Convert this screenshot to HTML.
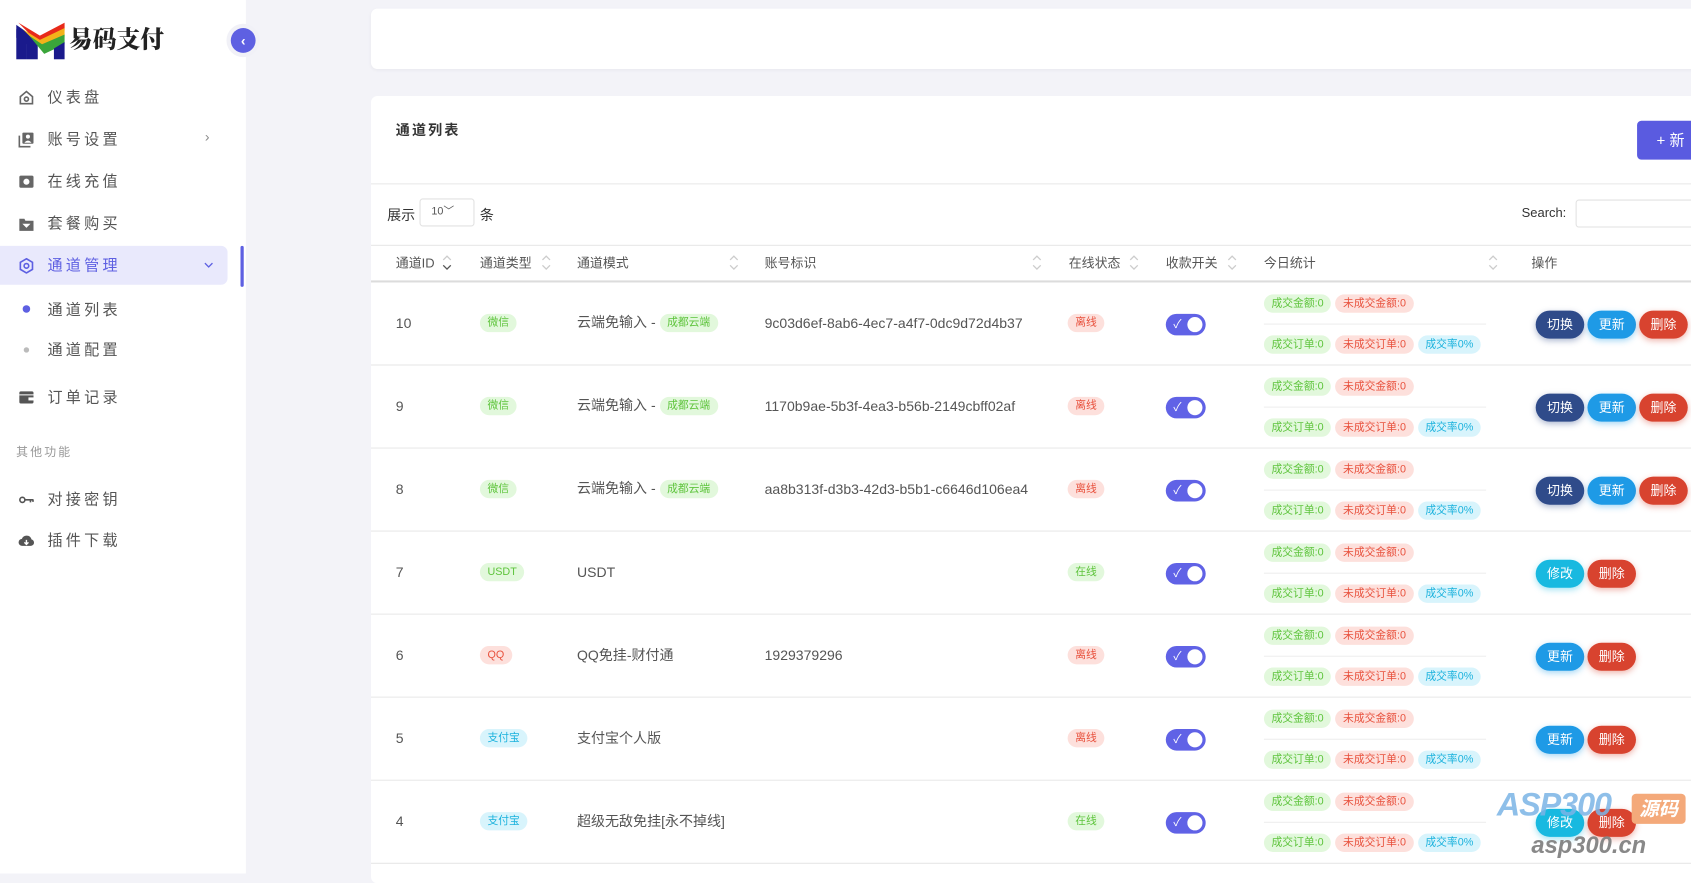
<!DOCTYPE html>
<html><head><meta charset="utf-8">
<style>
*{box-sizing:border-box;margin:0;padding:0}
html,body{width:1691px;height:865px;overflow:hidden;background:#f3f3f8}
body{font-family:"Liberation Sans","Noto Sans CJK SC",sans-serif;color:#555}
#w{position:absolute;left:0;top:0;width:1568px;height:810px;transform:scale(1.07844);transform-origin:0 0}
.a{position:absolute}
#side{left:0;top:0;width:228px;height:810px;background:#fff}
.mi{position:absolute;left:44px;font-size:14px;letter-spacing:3px;color:#555;line-height:20px}
.ic{position:absolute;left:17px;width:15px;height:15px}
.card{background:#fff;border-radius:6px}
.th{position:absolute;top:236px;font-size:12px;color:#555;line-height:16px}
.so{position:absolute;top:235px;width:9px;height:18px}
.row{position:absolute;left:344px;width:1224px;height:77px;border-bottom:1px solid #e6e6e6;background:#fff}
.c{position:absolute;top:30px;font-size:13px;line-height:16px;color:#555}
.tg{display:inline-block;font-size:10px;line-height:17px;height:17px;padding:0 7px;border-radius:9px;vertical-align:middle}
.g{background:#e2f8dc;color:#5ec43c}
.r{background:#fde0dc;color:#e8513d}
.b{background:#d8f4fc;color:#1bb2dd}
.tog{position:absolute;left:737px;top:29px;width:37px;height:20px;border-radius:10px;background:#6062e6}
.tog:after{content:"";position:absolute;right:3px;top:3px;width:14px;height:14px;border-radius:50%;background:#fff}
.tog span{position:absolute;left:7px;top:1px;color:#fff;font-size:11px}
.st1{position:absolute;left:828px;top:11px}
.st2{position:absolute;left:828px;top:49px}
.st1 .tg,.st2 .tg{margin-right:4px}
.ln{position:absolute;left:828px;top:38px;width:206px;border-top:1px solid #eee}
.bt{position:absolute;top:26px;height:26px;width:45px;border-radius:13px;color:#fff;font-size:12px;line-height:26px;text-align:center}
.nv{background:#2f4b8a;box-shadow:0 2px 6px rgba(47,75,138,.4)}
.bl{background:#1e9ae6;box-shadow:0 2px 6px rgba(30,154,230,.4)}
.rd{background:#d8432f;box-shadow:0 2px 6px rgba(216,67,47,.4)}
.cy{background:#18b9e0;box-shadow:0 2px 6px rgba(24,185,224,.4)}
</style></head><body><div id="w">
<div id="side" class="a">
 <svg class="a" style="left:15px;top:19px" width="45" height="36" viewBox="0 0 45 36">
  <path d="M0 4 L20 18 L20 36 L10 36 L10 22 L0 16Z" fill="#1a1a8c"/>
  <path d="M0 36 L0 8 L10 16 L10 36Z" fill="#1a1a8c"/>
  <path d="M2 2 L22 14 L45 2 L45 9 L22 22 Z" fill="#e82a1a"/>
  <path d="M6 8 L22 18 L45 7 L45 15 L24 26 Z" fill="#f3b21a"/>
  <path d="M12 14 L24 22 L45 13 L45 22 L26 31 Z" fill="#3aa53a"/>
  <path d="M35 26 L45 20 L45 36 L35 36Z" fill="#1a1a8c"/>
 </svg>
 <div class="a" style="left:64px;top:22px;font-family:'Noto Serif CJK SC','Liberation Serif',serif;font-weight:900;font-size:22px;color:#222;line-height:28px">易码支付</div>
 <div class="a" style="left:214px;top:26px;width:23px;height:23px;border-radius:50%;background:#5e60e2;box-shadow:0 0 0 4px #f1f1f7;color:#fff;font-size:13px;line-height:23px;text-align:center;font-weight:bold">‹</div>

 <svg class="ic" style="top:83px" viewBox="0 0 16 16" fill="none" stroke="#666" stroke-width="1.6"><path d="M2 7 L8 2 L14 7 V14 H2Z"/><circle cx="8" cy="9.5" r="2"/></svg>
 <div class="mi" style="top:80px">仪表盘</div>
 <svg class="ic" style="top:122px" viewBox="0 0 16 16"><rect x="4" y="1" width="11" height="11" rx="1" fill="#666"/><circle cx="9.5" cy="5" r="2" fill="#fff"/><path d="M6 11 Q9.5 7 13 11Z" fill="#fff"/><path d="M1 4 V15 H12" stroke="#666" stroke-width="1.6" fill="none"/></svg>
 <div class="mi" style="top:119px">账号设置</div>
 <div class="a" style="left:190px;top:119px;color:#888;font-size:13px">›</div>
 <svg class="ic" style="top:161px" viewBox="0 0 16 16"><rect x="1" y="2" width="14" height="12" rx="1.5" fill="#666"/><circle cx="8" cy="8" r="3" fill="#fff"/></svg>
 <div class="mi" style="top:158px">在线充值</div>
 <svg class="ic" style="top:200px" viewBox="0 0 16 16"><path d="M1 3 H6 L7 5 H15 V15 H1Z" fill="#666"/><path d="M4 8 H12 L8 12Z" fill="#fff"/></svg>
 <div class="mi" style="top:197px">套餐购买</div>
 <div class="a" style="left:0;top:228px;width:211px;height:36px;background:#e9e9fc;border-radius:0 6px 6px 0"></div>
 <div class="a" style="left:223px;top:228px;width:3px;height:38px;background:#5e60e2;border-radius:2px"></div>
 <svg class="ic" style="top:239px" viewBox="0 0 16 16" fill="none" stroke="#5e60e2" stroke-width="1.6"><path d="M8 1 L14 4.5 V11.5 L8 15 L2 11.5 V4.5Z"/><circle cx="8" cy="8" r="2.3"/></svg>
 <div class="mi" style="top:236px;color:#5e60e2">通道管理</div>
 <svg class="a" style="left:189px;top:243px" width="9" height="6" viewBox="0 0 9 6" fill="none" stroke="#5e60e2" stroke-width="1.2"><path d="M1 1 L4.5 4.5 L8 1"/></svg>
 <div class="a" style="left:21px;top:283px;width:7px;height:7px;border-radius:50%;background:#5e60e2"></div>
 <div class="mi" style="top:277px">通道列表</div>
 <div class="a" style="left:22px;top:322px;width:5px;height:5px;border-radius:50%;background:#bbb"></div>
 <div class="mi" style="top:314px">通道配置</div>
 <svg class="ic" style="top:361px" viewBox="0 0 16 16"><rect x="1" y="2" width="14" height="12" rx="1.5" fill="#555"/><rect x="1" y="5" width="14" height="1" fill="#fff"/><rect x="10" y="8" width="5" height="3" fill="#fff"/></svg>
 <div class="mi" style="top:358px">订单记录</div>
 <div class="a" style="left:15px;top:411px;font-size:11px;color:#999;letter-spacing:2px">其他功能</div>
 <svg class="ic" style="top:456px" viewBox="0 0 16 16" fill="none" stroke="#555" stroke-width="1.6"><circle cx="4" cy="8" r="2.5"/><path d="M6.5 8 H15 M12 8 V10.5 M14.5 8 V10"/></svg>
 <div class="mi" style="top:453px">对接密钥</div>
 <svg class="ic" style="top:494px" viewBox="0 0 16 16"><path d="M4 13 A3.5 3.5 0 0 1 3.5 6 A5 5 0 0 1 13 6.5 A3.3 3.3 0 0 1 12.5 13Z" fill="#555"/><path d="M8 7 V11 M6 9.5 L8 11.5 L10 9.5" stroke="#fff" stroke-width="1.4" fill="none"/></svg>
 <div class="mi" style="top:491px">插件下载</div>
</div>

<div class="a card" style="left:344px;top:8px;width:1240px;height:56px;box-shadow:0 1px 3px rgba(0,0,0,.04)"></div>
<div class="a card" style="left:344px;top:89px;width:1240px;height:730px"></div>
<div class="a" style="left:367px;top:110px;font-size:13px;font-weight:bold;color:#333;letter-spacing:2px">通道列表</div>
<div class="a" style="left:1518px;top:112px;width:60px;height:36px;background:#5a5be0;border-radius:4px;color:#fff;font-size:14px;line-height:36px;padding-left:18px">+ 新</div>
<div class="a" style="left:344px;top:170px;width:1224px;border-top:1px solid #e8e8e8"></div>
<div class="a" style="left:359px;top:189px;font-size:13px;color:#333">展示</div>
<div class="a" style="left:389px;top:184px;width:51px;height:26px;border:1px solid #e2e2e2;border-radius:3px;font-size:10px;line-height:24px;padding-left:10px;color:#555">10﹀</div>
<div class="a" style="left:445px;top:189px;font-size:13px;color:#333">条</div>
<div class="a" style="left:1411px;top:190px;font-size:12px;color:#333">Search:</div>
<div class="a" style="left:1461px;top:185px;width:120px;height:26px;border:1px solid #e2e2e2;border-radius:3px"></div>
<div class="a" style="left:344px;top:227px;width:1224px;height:35px;background:#fff;border-top:1px solid #e8e8e8;border-bottom:2px solid #dcdcdc"></div>
<div class="th" style="left:367px">通道ID</div>
<svg class="so" style="left:410px" viewBox="0 0 9 18" fill="none" stroke-width="1.2"><path d="M1 6 L4.5 2.5 L8 6" stroke="#ccc"/><path d="M1 11 L4.5 14.5 L8 11" stroke="#555"/></svg>
<div class="th" style="left:445px">通道类型</div>
<svg class="so" style="left:502px" viewBox="0 0 9 18" fill="none" stroke="#ccc" stroke-width="1.2"><path d="M1 6 L4.5 2.5 L8 6 M1 11 L4.5 14.5 L8 11"/></svg>
<div class="th" style="left:535px">通道模式</div>
<svg class="so" style="left:676px" viewBox="0 0 9 18" fill="none" stroke="#ccc" stroke-width="1.2"><path d="M1 6 L4.5 2.5 L8 6 M1 11 L4.5 14.5 L8 11"/></svg>
<div class="th" style="left:709px">账号标识</div>
<svg class="so" style="left:957px" viewBox="0 0 9 18" fill="none" stroke="#ccc" stroke-width="1.2"><path d="M1 6 L4.5 2.5 L8 6 M1 11 L4.5 14.5 L8 11"/></svg>
<div class="th" style="left:991px">在线状态</div>
<svg class="so" style="left:1047px" viewBox="0 0 9 18" fill="none" stroke="#ccc" stroke-width="1.2"><path d="M1 6 L4.5 2.5 L8 6 M1 11 L4.5 14.5 L8 11"/></svg>
<div class="th" style="left:1081px">收款开关</div>
<svg class="so" style="left:1138px" viewBox="0 0 9 18" fill="none" stroke="#ccc" stroke-width="1.2"><path d="M1 6 L4.5 2.5 L8 6 M1 11 L4.5 14.5 L8 11"/></svg>
<div class="th" style="left:1172px">今日统计</div>
<svg class="so" style="left:1380px" viewBox="0 0 9 18" fill="none" stroke="#ccc" stroke-width="1.2"><path d="M1 6 L4.5 2.5 L8 6 M1 11 L4.5 14.5 L8 11"/></svg>
<div class="th" style="left:1420px">操作</div>

<div class="row" style="top:262px">
<div class="c" style="left:23px">10</div><div class="c" style="left:101px;top:29px"><span class="tg g">微信</span></div>
<div class="c" style="left:191px;top:29px">云端免输入 - <span class="tg g">成都云端</span></div>
<div class="c" style="left:365px">9c03d6ef-8ab6-4ec7-a4f7-0dc9d72d4b37</div>
<div class="c" style="left:646px;top:29px"><span class="tg r">离线</span></div>
<div class="tog"><span>✓</span></div>
<div class="st1"><span class="tg g">成交金额:0</span><span class="tg r">未成交金额:0</span></div><div class="ln"></div>
<div class="st2"><span class="tg g">成交订单:0</span><span class="tg r">未成交订单:0</span><span class="tg b">成交率0%</span></div>
<div class="bt nv" style="left:1080px">切换</div><div class="bt bl" style="left:1128px">更新</div><div class="bt rd" style="left:1176px">删除</div>
</div>
<div class="row" style="top:339px">
<div class="c" style="left:23px">9</div><div class="c" style="left:101px;top:29px"><span class="tg g">微信</span></div>
<div class="c" style="left:191px;top:29px">云端免输入 - <span class="tg g">成都云端</span></div>
<div class="c" style="left:365px">1170b9ae-5b3f-4ea3-b56b-2149cbff02af</div>
<div class="c" style="left:646px;top:29px"><span class="tg r">离线</span></div>
<div class="tog"><span>✓</span></div>
<div class="st1"><span class="tg g">成交金额:0</span><span class="tg r">未成交金额:0</span></div><div class="ln"></div>
<div class="st2"><span class="tg g">成交订单:0</span><span class="tg r">未成交订单:0</span><span class="tg b">成交率0%</span></div>
<div class="bt nv" style="left:1080px">切换</div><div class="bt bl" style="left:1128px">更新</div><div class="bt rd" style="left:1176px">删除</div>
</div>
<div class="row" style="top:416px">
<div class="c" style="left:23px">8</div><div class="c" style="left:101px;top:29px"><span class="tg g">微信</span></div>
<div class="c" style="left:191px;top:29px">云端免输入 - <span class="tg g">成都云端</span></div>
<div class="c" style="left:365px">aa8b313f-d3b3-42d3-b5b1-c6646d106ea4</div>
<div class="c" style="left:646px;top:29px"><span class="tg r">离线</span></div>
<div class="tog"><span>✓</span></div>
<div class="st1"><span class="tg g">成交金额:0</span><span class="tg r">未成交金额:0</span></div><div class="ln"></div>
<div class="st2"><span class="tg g">成交订单:0</span><span class="tg r">未成交订单:0</span><span class="tg b">成交率0%</span></div>
<div class="bt nv" style="left:1080px">切换</div><div class="bt bl" style="left:1128px">更新</div><div class="bt rd" style="left:1176px">删除</div>
</div>
<div class="row" style="top:493px">
<div class="c" style="left:23px">7</div><div class="c" style="left:101px;top:29px"><span class="tg g">USDT</span></div>
<div class="c" style="left:191px">USDT</div>
<div class="c" style="left:646px;top:29px"><span class="tg g">在线</span></div>
<div class="tog"><span>✓</span></div>
<div class="st1"><span class="tg g">成交金额:0</span><span class="tg r">未成交金额:0</span></div><div class="ln"></div>
<div class="st2"><span class="tg g">成交订单:0</span><span class="tg r">未成交订单:0</span><span class="tg b">成交率0%</span></div>
<div class="bt cy" style="left:1080px">修改</div><div class="bt rd" style="left:1128px">删除</div>
</div>
<div class="row" style="top:570px">
<div class="c" style="left:23px">6</div><div class="c" style="left:101px;top:29px"><span class="tg r">QQ</span></div>
<div class="c" style="left:191px">QQ免挂-财付通</div>
<div class="c" style="left:365px">1929379296</div>
<div class="c" style="left:646px;top:29px"><span class="tg r">离线</span></div>
<div class="tog"><span>✓</span></div>
<div class="st1"><span class="tg g">成交金额:0</span><span class="tg r">未成交金额:0</span></div><div class="ln"></div>
<div class="st2"><span class="tg g">成交订单:0</span><span class="tg r">未成交订单:0</span><span class="tg b">成交率0%</span></div>
<div class="bt bl" style="left:1080px">更新</div><div class="bt rd" style="left:1128px">删除</div>
</div>
<div class="row" style="top:647px">
<div class="c" style="left:23px">5</div><div class="c" style="left:101px;top:29px"><span class="tg b">支付宝</span></div>
<div class="c" style="left:191px">支付宝个人版</div>
<div class="c" style="left:646px;top:29px"><span class="tg r">离线</span></div>
<div class="tog"><span>✓</span></div>
<div class="st1"><span class="tg g">成交金额:0</span><span class="tg r">未成交金额:0</span></div><div class="ln"></div>
<div class="st2"><span class="tg g">成交订单:0</span><span class="tg r">未成交订单:0</span><span class="tg b">成交率0%</span></div>
<div class="bt bl" style="left:1080px">更新</div><div class="bt rd" style="left:1128px">删除</div>
</div>
<div class="row" style="top:724px">
<div class="c" style="left:23px">4</div><div class="c" style="left:101px;top:29px"><span class="tg b">支付宝</span></div>
<div class="c" style="left:191px">超级无敌免挂[永不掉线]</div>
<div class="c" style="left:646px;top:29px"><span class="tg g">在线</span></div>
<div class="tog"><span>✓</span></div>
<div class="st1"><span class="tg g">成交金额:0</span><span class="tg r">未成交金额:0</span></div><div class="ln"></div>
<div class="st2"><span class="tg g">成交订单:0</span><span class="tg r">未成交订单:0</span><span class="tg b">成交率0%</span></div>
<div class="bt cy" style="left:1080px">修改</div><div class="bt rd" style="left:1128px">删除</div>
</div>

<div class="a" style="left:1388px;top:730px;font-size:30px;font-style:italic;font-weight:bold;color:#7bb4e6;opacity:.85;letter-spacing:-1px">ASP300</div>
<div class="a" style="left:1513px;top:736px;width:50px;height:28px;background:#f4a97a;border-radius:4px;color:#fff;font-size:18px;font-weight:bold;line-height:28px;text-align:center;font-style:italic">源码</div>
<div class="a" style="left:1420px;top:771px;font-size:22px;font-style:italic;font-weight:bold;color:#888">asp300.cn</div>
</div></body></html>
